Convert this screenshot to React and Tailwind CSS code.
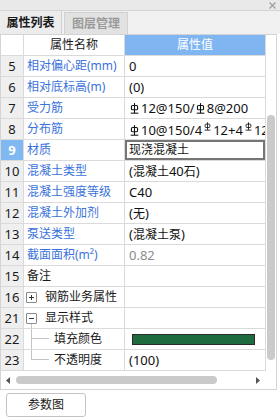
import React from "react";

const Rebar = ({ small }) => (
  <svg
    width={small ? 7 : 9}
    height={small ? 9 : 11}
    viewBox="0 0 10 12"
    className={small ? "inline-block align-[4px] mx-[2px]" : "inline-block align-[-1px] ml-[1px] mr-[2px]"}
  >
    <line x1="5" y1="0" x2="5" y2="11" stroke="currentColor" strokeWidth="1.2" />
    <rect x="1.6" y="2.6" width="6.8" height="4.8" rx="1.2" fill="none" stroke="currentColor" strokeWidth="1.2" />
    <line x1="0.8" y1="11.2" x2="9.2" y2="11.2" stroke="currentColor" strokeWidth="1.2" />
  </svg>
);

const L = ({ children }) => <span className="text-[13px]">{children}</span>;

function mix(str) {
  return str
    .split(/([\u4e00-\u9fff]+)/)
    .filter((s) => s.length)
    .map((s, k) => (/[\u4e00-\u9fff]/.test(s) ? <span key={k}>{s}</span> : <L key={k}>{s}</L>));
}

const rows = [
  { i: "5", name: "相对偏心距(mm)", val: mix("0"), blue: true },
  { i: "6", name: "相对底标高(m)", val: mix("(0)"), blue: true },
  {
    i: "7",
    name: "受力筋",
    blue: true,
    val: (
      <>
        <Rebar />
        <L>12@150/</L>
        <Rebar />
        <L>8@200</L>
      </>
    ),
  },
  {
    i: "8",
    name: "分布筋",
    blue: true,
    val: (
      <>
        <Rebar />
        <L>10@150/4</L>
        <Rebar small />
        <L>12+4</L>
        <Rebar small />
        <L>12</L>
      </>
    ),
  },
  { i: "9", name: "材质", val: "现浇混凝土", blue: true, selected: true },
  { i: "10", name: "混凝土类型", val: mix("(混凝土40石)"), blue: true },
  { i: "11", name: "混凝土强度等级", val: mix("C40"), blue: true },
  { i: "12", name: "混凝土外加剂", val: mix("(无)"), blue: true },
  { i: "13", name: "泵送类型", val: mix("(混凝土泵)"), blue: true },
  { i: "14", name: "截面面积(m²)", val: mix("0.82"), blue: true, gray: true },
  { i: "15", name: "备注", val: "" },
  { i: "16", name: "钢筋业务属性", val: "", tree: "plus" },
  { i: "21", name: "显示样式", val: "", tree: "minus" },
  { i: "22", name: "填充颜色", val: "bar", tree: "child" },
  { i: "23", name: "不透明度", val: mix("(100)"), tree: "last" },
];

function NameCell({ r }) {
  const color = r.blue ? "text-[#3a72dc]" : "text-[#1a1a1a]";
  if (r.tree === "plus" || r.tree === "minus") {
    return (
      <div className="flex h-full items-center pl-[2px]">
        <div className="flex h-full w-[11px] flex-col items-center">
          <div className="h-[5px]" />
          <div className="flex h-[11px] w-[11px] items-center justify-center rounded-[1px] border border-[#8a8a8a] bg-white">
            <div className="relative h-[1px] w-[5px] bg-[#333]">
              {r.tree === "plus" && (
                <div className="absolute left-[2px] top-[-2px] h-[5px] w-[1px] bg-[#333]" />
              )}
            </div>
          </div>
          {r.tree === "minus" && <div className="w-0 flex-1 border-l border-[#c4c4c4]" />}
        </div>
        <span className={`ml-[8px] ${color}`}>{r.name}</span>
      </div>
    );
  }
  if (r.tree === "child" || r.tree === "last") {
    return (
      <div className="flex h-full items-center pl-[7px]">
        <div className="flex h-full w-[18px] flex-col">
          <div className="h-[10px] border-b border-l border-[#c4c4c4]" />
          {r.tree === "child" && <div className="flex-1 border-l border-[#c4c4c4]" />}
        </div>
        <span className={`ml-[5px] ${color}`}>{r.name}</span>
      </div>
    );
  }
  return (
    <div className="flex h-full items-center pl-[3px]">
      <span className={`whitespace-nowrap ${color}`}>{r.name}</span>
    </div>
  );
}

function ValueCell({ r }) {
  if (r.selected) {
    return (
      <div className="flex h-full items-center border-2 border-[#767676] pl-[2px] text-[#111]">
        {r.val}
      </div>
    );
  }
  if (r.val === "bar") {
    return (
      <div className="flex h-full items-center pl-[7px]">
        <div className="h-[11px] w-[123px] border border-[#2a2a2a] bg-[#1f6b40]" />
      </div>
    );
  }
  return (
    <div
      className={`flex h-full items-center overflow-hidden whitespace-nowrap pl-[4px] ${
        r.gray ? "text-[#8c8c8c]" : "text-[#111]"
      }`}
    >
      <span className="whitespace-nowrap">{r.val}</span>
    </div>
  );
}

export default function App() {
  return (
    <div className="relative h-[420px] w-[280px] overflow-hidden bg-white font-['Noto_Sans','Noto_Sans_CJK_SC',sans-serif] text-[12px] leading-none">
      {/* title bar */}
      <div className="flex h-[11px] items-center justify-end border-b border-[#d4d4d4] bg-[#e9e9e9] pr-[4px]">
        <svg width="7" height="7" viewBox="0 0 7 7">
          <path d="M0.5 0.5 L6.5 6.5 M6.5 0.5 L0.5 6.5" stroke="#9a9a9a" strokeWidth="1.1" />
        </svg>
      </div>
      {/* tabs */}
      <div className="flex h-[23px] items-end bg-[#f0f0f0]">
        <div className="flex h-[23px] w-[62px] items-center justify-center border-r border-[#d0d0d0] bg-[#ececec] font-bold text-[12px] text-[#1a1a1a]">
          属性列表
        </div>
        <div className="ml-[2px] flex h-[22px] w-[64px] items-center justify-center border border-b-0 border-[#d2d2d2] bg-[#e2e2e2] font-bold text-[12px] text-[#9a9a9a]">
          图层管理
        </div>
      </div>
      {/* panel */}
      <div className="flex h-[356px] w-[277px] border border-[#d4d4d4] bg-white">
        <div className="flex w-[265px] flex-col">
          {/* header */}
          <div className="flex h-[21px] border-b border-[#dadada]">
            <div className="h-full w-[23px] border-r border-[#dadada] bg-white" />
            <div className="flex h-full w-[101px] items-center justify-center border-r border-[#dadada] text-[#1a1a1a]">
              属性名称
            </div>
            <div className="flex h-full w-[141px] items-center justify-center border-r border-[#dadada] bg-[#7fb6f2] text-white">
              属性值
            </div>
          </div>
          {rows.map((r) => (
            <div key={r.i} className="flex h-[21px] border-b border-[#dadada]">
              <div
                className={`flex h-full w-[23px] items-center justify-center border-r border-[#dadada] text-[13px] ${
                  r.selected ? "bg-[#80b8f2] font-bold text-white" : "bg-[#efefef] text-[#1a1a1a]"
                }`}
              >
                {r.i}
              </div>
              <div className="h-full w-[101px] overflow-hidden border-r border-[#dadada]">
                <NameCell r={r} />
              </div>
              <div className="h-full w-[141px] border-r border-[#dadada]">
                <ValueCell r={r} />
              </div>
            </div>
          ))}
          {/* horizontal scrollbar */}
          <div className="flex flex-1 items-center pl-[5px] pr-[6px]">
            <svg width="4" height="7" viewBox="0 0 4 7">
              <path d="M4 0 L0 3.5 L4 7 Z" fill="#555" />
            </svg>
            <div className="ml-[6px] h-[8px] w-[201px] rounded-full bg-[#cacaca]" />
            <div className="flex-1" />
            <svg width="4" height="7" viewBox="0 0 4 7">
              <path d="M0 0 L4 3.5 L0 7 Z" fill="#555" />
            </svg>
          </div>
        </div>
        {/* vertical scrollbar */}
        <div className="flex flex-1 flex-col items-center pt-[80px]">
          <div className="h-[245px] w-[8px] rounded-full bg-[#cacaca]" />
        </div>
      </div>
      {/* button */}
      <div className="pl-[6px] pt-[3px]">
        <div className="flex h-[24px] w-[80px] items-center justify-center rounded-[3px] border border-[#c4c4c4] bg-white text-[#1a1a1a]">
          参数图
        </div>
      </div>
    </div>
  );
}
